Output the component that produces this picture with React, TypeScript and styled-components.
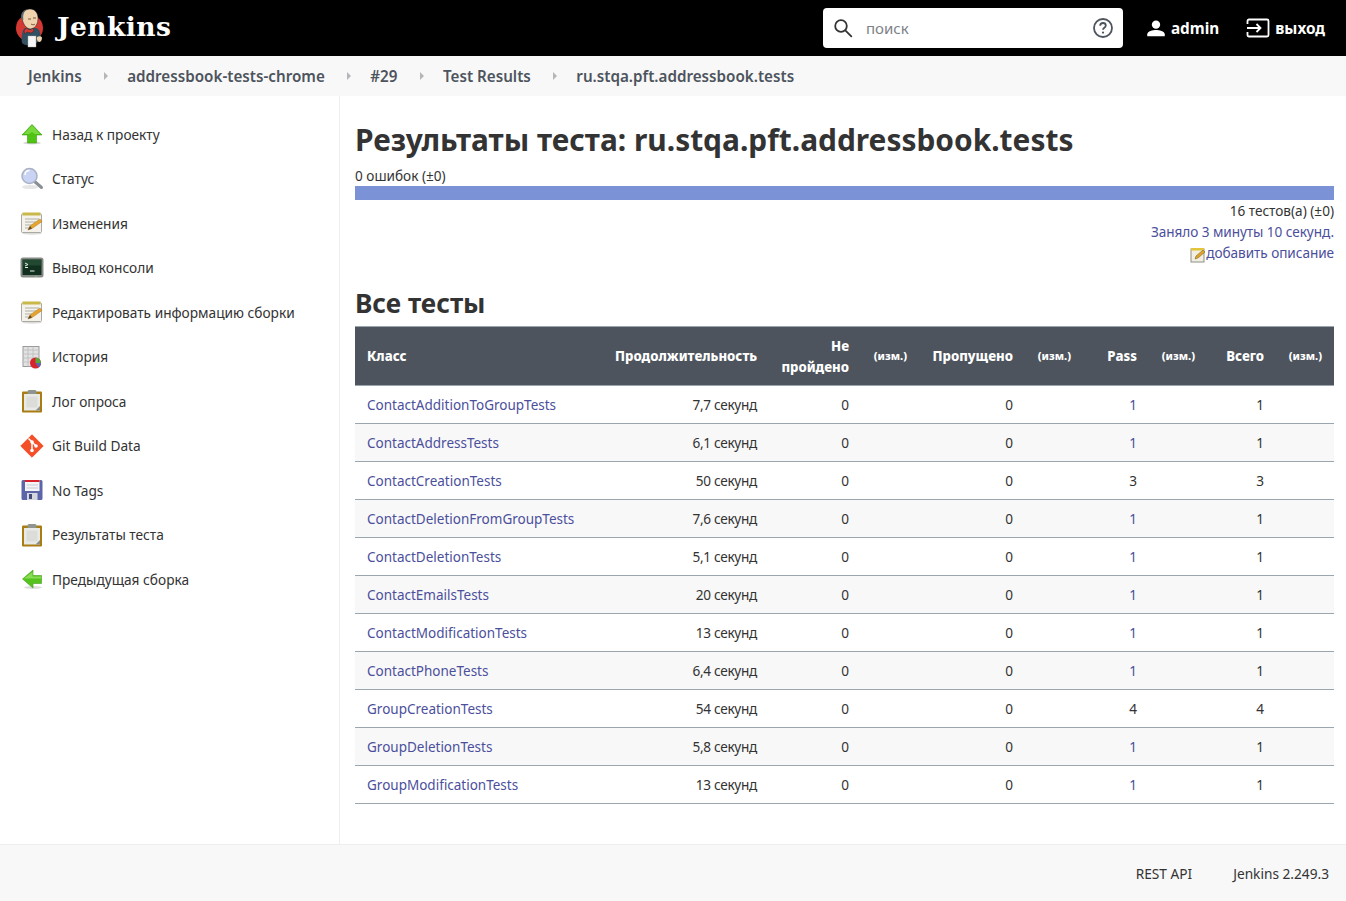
import styled, { createGlobalStyle } from 'styled-components';
import type { ReactNode } from 'react';

const GlobalStyle = createGlobalStyle`
  html, body {
    margin: 0;
    padding: 0;
    background: #fff;
    color: #333;
    font-family: 'Noto Sans', 'Liberation Sans', sans-serif;
    font-size: 14px;
  }
`;

type IconName = 'up' | 'search' | 'notepad' | 'terminal' | 'history' | 'clipboard' | 'git' | 'floppy' | 'back';

const icons: Record<IconName, ReactNode> = {
  up: (
    <>
      <ellipse cx="12" cy="21" rx="9" ry="1.5" fill="#d8d8d8" />
      <path d="M12 2.5 22 13h-5.500v8h-9v-8H2z" fill="#4fc414" stroke="#3c9d10" strokeWidth=".6" />
      <path d="M12 3.500 20 12h-5l-3-2-3 2H4z" fill="#8ae34f" opacity=".7" />
    </>
  ),
  search: (
    <>
      <ellipse cx="10" cy="20" rx="8" ry="2" fill="#e6e6e6" />
      <path d="m14 14 7.500 6.500" stroke="#8a8f96" strokeWidth="3" strokeLinecap="round" />
      <circle cx="9.500" cy="9" r="7.500" fill="#c9d3f3" stroke="#a9b1c4" strokeWidth="1.500" />
      <path d="M5 8c0-3 2-4.500 4.500-4.500" stroke="#fff" strokeWidth="1.500" fill="none" />
    </>
  ),
  notepad: (
    <>
      <ellipse cx="12" cy="22.500" rx="10" ry="1.200" fill="#ddd" />
      <rect x="1.500" y="3" width="20" height="18.500" rx="1" fill="#f4f2ea" stroke="#a9a9a2" />
      <rect x="2.500" y="1.500" width="18" height="3" fill="#c9b84a" />
      <path d="M5 8h14M5 11h11M5 14h7M5 17h5" stroke="#b0b0a8" />
      <path d="m8 19 2-4 10-7 2 2.500-10 7z" fill="#e9a52a" stroke="#a9742a" strokeWidth=".5" />
      <path d="m8 19 2-4 2 2.500z" fill="#5d4a2c" />
    </>
  ),
  terminal: (
    <>
      <rect x=".5" y="1.500" width="23" height="20" rx="2.500" fill="#878b88" />
      <rect x="2.500" y="3.500" width="19" height="15.500" fill="#12301f" />
      <path d="M2.500 3.500h19v6h-19z" fill="#295239" opacity=".7" />
      <path d="m5 7 3 1.500-3 1.500M5 11.500h3M10 15h4.500" stroke="#e6f2e6" strokeWidth="1" fill="none" />
      <circle cx="16" cy="20.300" r=".6" fill="#7ee07e" />
    </>
  ),
  history: (
    <>
      <rect x="3" y="1.500" width="16" height="20" fill="#e2e2e2" stroke="#9a9a9a" />
      <path d="M3 5h16M3 9h16M3 13h16M3 17h16M8 1.500v20M13 1.500v20" stroke="#bdbdbd" strokeWidth=".8" />
      <circle cx="15.500" cy="18" r="5.500" fill="#d9232a" />
      <path d="M15.500 18V12.500a5.500 5.500 0 0 1 5.500 5.500z" fill="#5aa63a" />
      <path d="M15.500 18H21a5.500 5.500 0 0 1-2.500 4.600z" fill="#5c66b5" />
    </>
  ),
  clipboard: (
    <>
      <rect x="2" y="2.500" width="20" height="21" rx="1" fill="#a97d12" />
      <rect x="4" y="5" width="16" height="16.500" fill="#e9e9e6" />
      <path d="M6.500 7.500h11v11h-11z" fill="#dcdcd8" />
      <path d="m15.500 21.500 4.500-4.500v4.500z" fill="#8d8d8d" />
      <path d="M7.500 5V2.500c0-1 1-1.500 1.500-1.500h6c.5 0 1.500.5 1.500 1.500V5z" fill="#8f9690" />
    </>
  ),
  git: (
    <>
      <path d="M12 .8 23.200 12 12 23.200.8 12z" fill="#f34f29" stroke="#f34f29" strokeLinejoin="round" />
      <path d="m8.500 4.500 3.500 3.500v8M12 8l4 4" stroke="#fff" strokeWidth="1.500" fill="none" />
      <circle cx="12" cy="8" r="1.800" fill="#fff" />
      <circle cx="16" cy="12" r="1.800" fill="#fff" />
      <circle cx="12" cy="16.500" r="1.800" fill="#fff" />
    </>
  ),
  floppy: (
    <>
      <path d="M1.500 3.500a1.500 1.500 0 0 1 1.500-1.500h18a1.500 1.500 0 0 1 1.500 1.500v17a1.500 1.500 0 0 1-1.500 1.500H3a1.500 1.500 0 0 1-1.500-1.500z" fill="#5c64aa" />
      <rect x="5" y="2" width="14.500" height="11" fill="#f4f4f4" />
      <rect x="5" y="2" width="14.500" height="2" fill="#d9232a" />
      <path d="M6.500 7h11.500M6.500 10h11.500" stroke="#c9c9d8" />
      <rect x="7" y="15" width="10.500" height="7" fill="#d5d7de" />
      <rect x="9" y="16" width="3" height="5" fill="#44497e" />
    </>
  ),
  back: (
    <>
      <ellipse cx="13" cy="20.500" rx="9" ry="1.500" fill="#dcdcdc" />
      <path d="M2.500 12 13 3v5.500h8.500v8H13V21z" fill="#55c21e" stroke="#4a9f1d" strokeWidth=".6" />
      <path d="M4 11.500 12.500 5v4.500h8.500v2z" fill="#97e263" opacity=".8" />
    </>
  ),
};

const sideItems: { icon: IconName; label: string }[] = [
  { icon: 'up', label: 'Назад к проекту' },
  { icon: 'search', label: 'Статус' },
  { icon: 'notepad', label: 'Изменения' },
  { icon: 'terminal', label: 'Вывод консоли' },
  { icon: 'notepad', label: 'Редактировать информацию сборки' },
  { icon: 'history', label: 'История' },
  { icon: 'clipboard', label: 'Лог опроса' },
  { icon: 'git', label: 'Git Build Data' },
  { icon: 'floppy', label: 'No Tags' },
  { icon: 'clipboard', label: 'Результаты теста' },
  { icon: 'back', label: 'Предыдущая сборка' },
];

const crumbs = ['Jenkins', 'addressbook-tests-chrome', '#29', 'Test Results', 'ru.stqa.pft.addressbook.tests'];

const rows = [
  { name: 'ContactAdditionToGroupTests', time: '7,7 секунд', pass: 1 },
  { name: 'ContactAddressTests', time: '6,1 секунд', pass: 1 },
  { name: 'ContactCreationTests', time: '50 секунд', pass: 3 },
  { name: 'ContactDeletionFromGroupTests', time: '7,6 секунд', pass: 1 },
  { name: 'ContactDeletionTests', time: '5,1 секунд', pass: 1 },
  { name: 'ContactEmailsTests', time: '20 секунд', pass: 1 },
  { name: 'ContactModificationTests', time: '13 секунд', pass: 1 },
  { name: 'ContactPhoneTests', time: '6,4 секунд', pass: 1 },
  { name: 'GroupCreationTests', time: '54 секунд', pass: 4 },
  { name: 'GroupDeletionTests', time: '5,8 секунд', pass: 1 },
  { name: 'GroupModificationTests', time: '13 секунд', pass: 1 },
];

const colWidths = [248, 166, 92, 58, 106, 58, 66, 58, 69, 58];

function JenkinsLogo() {
  return (
    <LogoSvg viewBox="0 0 28 40">
      <circle cx="13.500" cy="20" r="13.500" fill="#d33833" />
      <path d="M6 35c-1-6 0-13 3-15l11 0c4 1 5 6 4 11-2 3-4 5-8 6-4 1-8 0-10-2z" fill="#335061" />
      <path d="M6 10C5 5 9 1 14 1c5 0 8 4 8 9 0 5-2 10-7 11-5 0-8-5-9-11z" fill="#efd3ae" stroke="#231f20" strokeWidth=".5" />
      <path d="M5.500 11C4 6 7 2 11 1.200 8 3 6.500 7 7.500 12z" fill="#5b6b78" />
      <path d="M12 11h3M17 10h3M15 16c1.500 1 3 1 4 0" stroke="#5b3a22" strokeWidth=".8" fill="none" />
      <path d="m10 20 4 2 3-2 1 3-3 2-4-1-2 2-1-3z" fill="#d33833" stroke="#231f20" strokeWidth=".4" />
      <rect x="12" y="28" width="8" height="11" fill="#f6f6f6" stroke="#aaa" strokeWidth=".4" />
      <path d="M21 29c2-1 4-1 5 .5 0 2.500-1 4.500-3 4.500-2-.5-2.500-3-2-5z" fill="#efd3ae" />
    </LogoSvg>
  );
}

function SideIcon({ name }: { name: IconName }) {
  return <IconSvg viewBox="0 0 24 24">{icons[name]}</IconSvg>;
}

export default function App() {
  return (
    <Page>
      <GlobalStyle />
      <Header>
        <Brand>
          <JenkinsLogo />
          <BrandName>Jenkins</BrandName>
        </Brand>
        <SearchBox>
          <svg width="20" height="20" viewBox="0 0 20 20" fill="none" stroke="#333" strokeWidth="1.800">
            <circle cx="8" cy="8" r="5.800" />
            <path d="m12.300 12.300 6 6" strokeLinecap="round" />
          </svg>
          <SearchText>поиск</SearchText>
          <svg width="22" height="22" viewBox="0 0 22 22" fill="none">
            <circle cx="11" cy="11" r="9" stroke="#4d545d" strokeWidth="1.800" />
            <path d="M8.200 8.700c0-1.700 1.300-2.700 2.800-2.700s2.800 1 2.800 2.500c0 2.200-2.800 2.200-2.800 4.300" stroke="#4d545d" strokeWidth="1.800" />
            <circle cx="11" cy="15.600" r="1.100" fill="#4d545d" />
          </svg>
        </SearchBox>
        <HeaderLink>
          <svg width="20" height="20" viewBox="0 0 24 24" fill="#fff">
            <circle cx="12" cy="8" r="5" />
            <path d="M1.500 22v-2.500c0-3.500 7-5 10.500-5s10.500 1.500 10.500 5V22z" />
          </svg>
          admin
        </HeaderLink>
        <HeaderLink>
          <svg width="24" height="20" viewBox="0 0 24 20" fill="none" stroke="#fff" strokeWidth="1.800">
            <path d="M1.500 6V3a1.500 1.500 0 0 1 1.500-1.500h18A1.500 1.500 0 0 1 22.500 3v14a1.500 1.500 0 0 1-1.500 1.500H3A1.500 1.500 0 0 1 1.500 17v-3" />
            <path d="M1 10h13M10.500 6l4 4-4 4" />
          </svg>
          выход
        </HeaderLink>
      </Header>
      <Breadcrumbs>
        {crumbs.map((c, i) => (
          <Crumb key={c}>
            {i > 0 && <CrumbArrow />}
            {c}
          </Crumb>
        ))}
      </Breadcrumbs>
      <Body>
        <Sidebar>
          {sideItems.map((item) => (
            <SideItem key={item.label}>
              <SideIcon name={item.icon} />
              {item.label}
            </SideItem>
          ))}
        </Sidebar>
        <Main>
          <Title>Результаты теста: ru.stqa.pft.addressbook.tests</Title>
          <Fails>0 ошибок (±0)</Fails>
          <Bar />
          <Summary>
            <div>16 тестов(а) (±0)</div>
            <SummaryLink>Заняло 3 минуты 10 секунд.</SummaryLink>
            <SummaryLink>
              <svg width="16" height="16" viewBox="0 0 16 16">
                <rect x="1" y="2" width="13" height="13" fill="#f2efe2" stroke="#8f8f88" />
                <rect x="1" y="1" width="13" height="2.500" fill="#e2c63a" />
                <path d="m5 12 1-3 7-6 2 2-7 6z" fill="#dfa22a" stroke="#7a5a20" strokeWidth=".5" />
              </svg>
              добавить описание
            </SummaryLink>
          </Summary>
          <Subtitle>Все тесты</Subtitle>
          <Table>
            <colgroup>
              {colWidths.map((w, i) => (
                <col key={i} width={w} />
              ))}
            </colgroup>
            <thead>
              <tr>
                <Th $left>Класс</Th>
                <Th>Продолжительность</Th>
                <Th>Не пройдено</Th>
                <DiffTh>(изм.)</DiffTh>
                <Th>Пропущено</Th>
                <DiffTh>(изм.)</DiffTh>
                <Th>Pass</Th>
                <DiffTh>(изм.)</DiffTh>
                <Th>Всего</Th>
                <DiffTh>(изм.)</DiffTh>
              </tr>
            </thead>
            <tbody>
              {rows.map((r) => (
                <Tr key={r.name}>
                  <Td $left>
                    <ClassLink>{r.name}</ClassLink>
                  </Td>
                  <TimeTd>{r.time}</TimeTd>
                  <Td>0</Td>
                  <Td />
                  <Td>0</Td>
                  <Td />
                  <Td>{r.pass === 1 ? <ClassLink>1</ClassLink> : r.pass}</Td>
                  <Td />
                  <Td>{r.pass}</Td>
                  <Td />
                </Tr>
              ))}
            </tbody>
          </Table>
        </Main>
      </Body>
      <Footer>
        <span>REST API</span>
        <span>Jenkins 2.249.3</span>
      </Footer>
    </Page>
  );
}

const Page = styled.div`
  height: 901px;
  display: flex;
  flex-direction: column;
  overflow: hidden;
`;

const Header = styled.header`
  height: 56px;
  flex: none;
  box-sizing: border-box;
  background: #000;
  display: flex;
  align-items: center;
  padding: 0 21px 0 16px;
`;

const Brand = styled.div`
  display: flex;
  align-items: center;
  gap: 13px;
  margin-right: auto;
`;

const LogoSvg = styled.svg`
  width: 28px;
  height: 40px;
`;

const BrandName = styled.span`
  font-family: 'DejaVu Serif', 'Liberation Serif', serif;
  font-weight: 700;
  font-size: 26.5px;
  letter-spacing: 0.45px;
  margin-bottom: 4px;
  color: #fff;
`;

const SearchBox = styled.div`
  width: 300px;
  height: 40px;
  box-sizing: border-box;
  background: #fff;
  border-radius: 4px;
  display: flex;
  align-items: center;
  padding: 0 9px 0 10px;
  margin-right: 23px;
`;

const SearchText = styled.span`
  flex: 1;
  margin-left: 13px;
  font-size: 15px;
  color: #7d8188;
`;

const HeaderLink = styled.div`
  display: flex;
  align-items: center;
  gap: 5px;
  color: #fff;
  font-size: 15.3px;
  font-weight: 700;

  & + & {
    margin-left: 27px;
  }
`;

const Breadcrumbs = styled.nav`
  height: 40px;
  flex: none;
  box-sizing: border-box;
  background: #f8f8f8;
  display: flex;
  align-items: center;
  padding-left: 28px;
`;

const Crumb = styled.span`
  display: flex;
  align-items: center;
  font-size: 15.2px;
  font-weight: 600;
  color: #4d545d;
`;

const CrumbArrow = styled.i`
  width: 0;
  height: 0;
  margin: 0 19px 0 22.5px;
  border-left: 4px solid #b4b6ba;
  border-top: 4px solid transparent;
  border-bottom: 4px solid transparent;
`;

const Body = styled.div`
  flex: 1;
  display: flex;
  min-height: 0;
`;

const Sidebar = styled.aside`
  width: 340px;
  flex: none;
  box-sizing: border-box;
  border-right: 1px solid #eee;
  padding: 16px 0 0 20px;
`;

const SideItem = styled.div`
  height: 44.5px;
  display: flex;
  align-items: center;
  gap: 8px;
  font-size: 13.7px;
  color: #333;
`;

const IconSvg = styled.svg`
  width: 24px;
  height: 24px;
  flex: none;
`;

const Main = styled.main`
  flex: 1;
  min-width: 0;
  padding: 20px 12px 0 15px;
`;

const Title = styled.h1`
  margin: 0;
  font-size: 29.9px;
  line-height: 48px;
  font-weight: 700;
  color: #333;
`;

const Fails = styled.div`
  font-size: 13.6px;
  line-height: 19px;
  margin: 2px 0 1px;
`;

const Bar = styled.div`
  height: 14px;
  background: #7b92d6;
`;

const Summary = styled.div`
  text-align: right;
  font-size: 13.6px;
  line-height: 21px;
`;

const SummaryLink = styled.div`
  color: #4b4f9c;
  letter-spacing: -0.06px;

  svg {
    vertical-align: -5px;
  }
`;

const Subtitle = styled.h2`
  margin: 17px 0 0;
  font-size: 26.2px;
  line-height: 46px;
  font-weight: 700;
  color: #333;
`;

const Table = styled.table`
  width: 979px;
  table-layout: fixed;
  border-collapse: collapse;
  border-top: 1px solid #9ba7af;
  font-size: 13.6px;
`;

const Th = styled.th<{ $left?: boolean }>`
  height: 59px;
  box-sizing: border-box;
  padding: 1px 12px 0;
  background: #4d545d;
  color: #fff;
  font-size: 13.2px;
  font-weight: 800;
  line-height: 21px;
  text-align: ${(p) => (p.$left ? 'left' : 'right')};
  border-bottom: 1px solid #9ba7af;
`;

const DiffTh = styled(Th)`
  padding: 0 12px 1px;
  font-size: 11px;
`;

const Tr = styled.tr`
  &:nth-child(even) td {
    background: #f8f8f8;
  }
`;

const Td = styled.td<{ $left?: boolean }>`
  height: 38px;
  box-sizing: border-box;
  padding: 0 12px;
  color: #333;
  line-height: 19px;
  text-align: ${(p) => (p.$left ? 'left' : 'right')};
  border-bottom: 1px solid #9ba7af;
`;

const TimeTd = styled(Td)`
  letter-spacing: -0.3px;
`;

const ClassLink = styled.span`
  font-size: 13.5px;
  color: #4b4f9c;
`;

const Footer = styled.footer`
  height: 57px;
  flex: none;
  box-sizing: border-box;
  background: #f8f8f8;
  border-top: 1px solid #eee;
  display: flex;
  justify-content: flex-end;
  align-items: center;
  gap: 41px;
  padding-right: 17px;
  font-size: 13.7px;
  color: #333;
`;
